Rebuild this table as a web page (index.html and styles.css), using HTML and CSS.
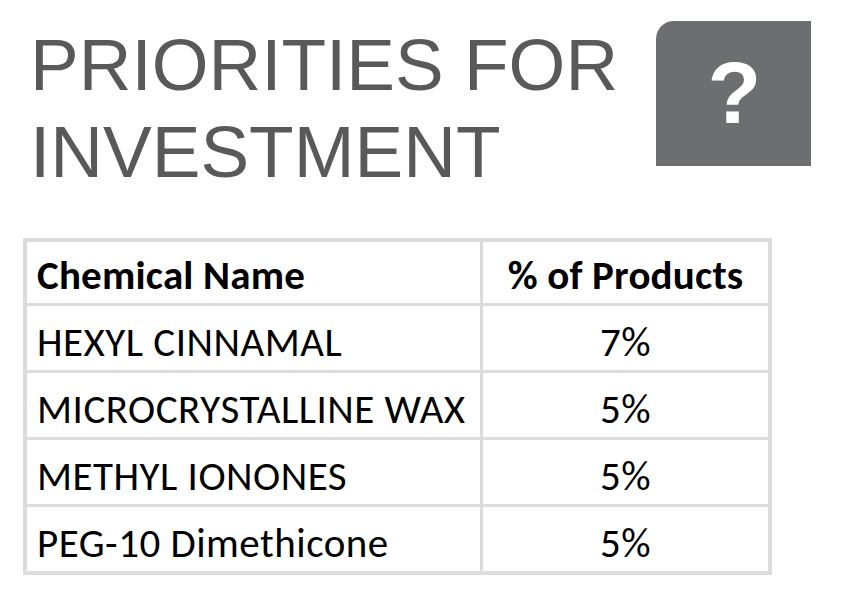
FILE: index.html
```html
<!DOCTYPE html>
<html lang="en">
<head>
<meta charset="utf-8">
<title>Priorities for Investment</title>
<link rel="stylesheet" href="styles.css">
</head>
<body>
<div class="page">
  <header class="top">
    <h1 class="title">PRIORITIES FOR<br>INVESTMENT</h1>
    <div class="help" aria-label="Help"><span class="qmark">?</span></div>
  </header>
  <table class="chem">
    <thead>
      <tr><th class="name">Chemical Name</th><th class="pct">% of Products</th></tr>
    </thead>
    <tbody>
      <tr><td class="name">HEXYL CINNAMAL</td><td class="pct">7%</td></tr>
      <tr><td class="name">MICROCRYSTALLINE WAX</td><td class="pct">5%</td></tr>
      <tr><td class="name">METHYL IONONES</td><td class="pct">5%</td></tr>
      <tr><td class="name">PEG-10 Dimethicone</td><td class="pct">5%</td></tr>
    </tbody>
  </table>
</div>
</body>
</html>
```
FILE: styles.css
```css
html, body {
  margin: 0;
  padding: 0;
  background: #ffffff;
}

.page {
  width: 846px;
  height: 606px;
  overflow: hidden;
}

.top {
  display: flex;
  align-items: flex-start;
  height: 238px;
}

.title {
  margin: 21px 0 0 30px;
  font-family: "Liberation Sans", Arial, sans-serif;
  font-weight: normal;
  font-size: 73px;
  line-height: 87px;
  color: #595959;
  width: 626px;
  letter-spacing: 0;
}

.help {
  margin-top: 21px;
  width: 155px;
  height: 145px;
  background: #6d6e70;
  border-top-left-radius: 18px;
  display: flex;
  align-items: center;
  justify-content: center;
}

.qmark {
  font-family: "Liberation Sans", Arial, sans-serif;
  font-weight: bold;
  font-size: 88px;
  line-height: 1;
  color: #ffffff;
  margin-top: -2px;
  margin-left: 2px;
}

.chem {
  margin-left: 23px;
  border-collapse: collapse;
  border: 4px solid #dcdcdc;
  width: 749px;
  font-family: Carlito, Calibri, Lato, sans-serif;
  font-size: 41px;
  letter-spacing: 0.5px;
  color: #000000;
}

.chem th,
.chem td {
  border: 3px solid #dcdcdc;
  padding: 7px 0 0 0;
  height: 57px;
  vertical-align: middle;
  font-weight: normal;
}

.chem th {
  font-weight: bold;
  height: 56px;
  padding-top: 5px;
  letter-spacing: 0.2px;
}

.chem .name {
  width: 443px;
  text-align: left;
  padding-left: 10px;
}

.chem .pct {
  text-align: center;
}
```
